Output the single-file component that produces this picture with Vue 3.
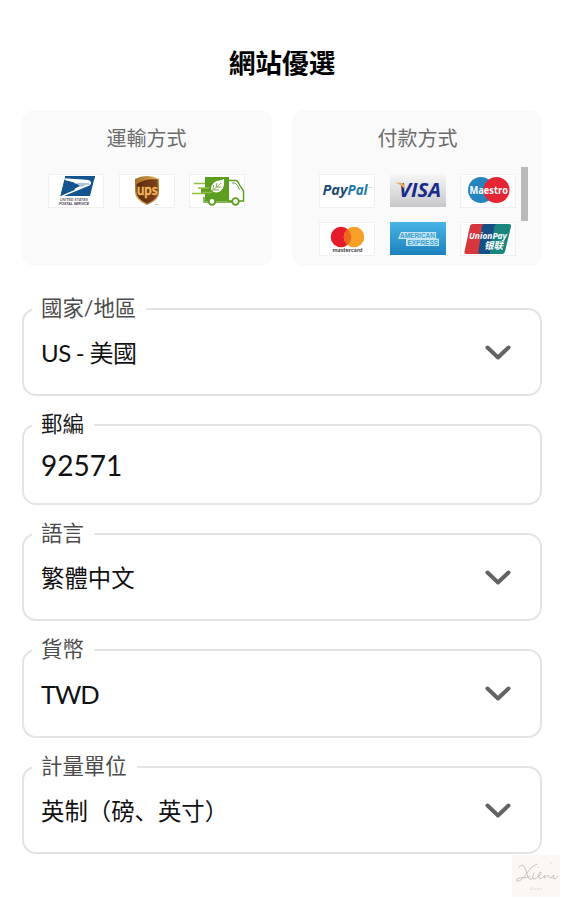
<script setup>
const fields = [
  { label: '國家/地區', value: 'US - 美國', kind: 'country', select: true },
  { label: '郵編', value: '92571', kind: 'zip', select: false },
  { label: '語言', value: '繁體中文', kind: 'language', select: true },
  { label: '貨幣', value: 'TWD', kind: 'currency', select: true },
  { label: '計量單位', value: '英制（磅、英寸）', kind: 'unit', select: true },
]
</script>

<template>
  <main class="page">
    <h1 class="title">網站優選</h1>

    <div class="cards">
      <section class="card">
        <h2>運輸方式</h2>
        <div class="logos">
          <svg class="tile framed" viewBox="0 0 56 34">
            <path d="M17.500 2H47L42 22H12.500z" fill="#13548e" />
            <path d="M17.500 4.200L38 5.800Q43.500 6 43 9.500L42 11.200L16 22L12.500 21.800L33 11.500Q29.500 9.600 25 8.700L16.800 6.500z" fill="#fff" />
            <path d="M17 2H47L46 6.500L38 5L17 4z" fill="#13548e" />
            <path d="M16.300 6L26 8.500Q28 12 26.500 16L12.500 22z" fill="#13548e" />
            <path d="M28 9h12q2 .3 1.600 2.500-1-1.200-3.500-.7L33 13z" fill="#a9c3da" />
            <text x="12" y="27" textLength="28" lengthAdjust="spacingAndGlyphs" font-size="3.900" font-weight="700" font-style="italic" fill="#655d68">UNITED STATES</text>
            <text x="11" y="31.200" textLength="30" lengthAdjust="spacingAndGlyphs" font-size="4.300" font-weight="700" font-style="italic" fill="#39304a">POSTAL SERVICE</text>
          </svg>
          <svg class="tile framed" viewBox="0 0 56 34">
            <defs>
              <linearGradient id="ups-gold" x1="0" x2="1" y1="0" y2="1"><stop stop-color="#9c641c" /><stop offset=".45" stop-color="#d9a551" /><stop offset="1" stop-color="#965b1e" /></linearGradient>
              <linearGradient id="ups-brown" x1="0" x2="1"><stop stop-color="#5b2b0d" /><stop offset="1" stop-color="#7c431b" /></linearGradient>
            </defs>
            <path d="M16 5Q28-1 40 5V18Q40 26 28 31Q16 26 16 18z" fill="url(#ups-gold)" />
            <path d="M17.500 10Q26 4 38.700 5.500V18Q38.500 25 28 29.500Q17.500 25 17.500 18z" fill="url(#ups-brown)" />
            <text x="18" y="20.500" textLength="20.500" lengthAdjust="spacingAndGlyphs" font-family="Lato" font-size="15" font-weight="700" fill="#f4b657" stroke="#f4b657" stroke-width=".4">ups</text>
            <text x="36" y="31" font-size="2.500" fill="#94683c">TM</text>
          </svg>
          <svg class="tile framed" viewBox="0 0 56 34">
            <path d="M16 3H40V27H16V20H12V14H16z" fill="#5b9e20" />
            <g fill="none" stroke="#5b9e20" stroke-width="1.400">
              <path d="M39 6.500H47Q49 7 50.500 11L54.500 17V27H39M15 23V28H48" />
              <path d="M43 9H46Q49 11 50.500 16" stroke="#75965f" stroke-width="1" />
              <path d="M5 9.500H16M9 14H20M3 19.500H15M14 18.500H23" stroke="#93be3e" />
            </g>
            <path d="M35 5Q36 14 31 17.500Q25 20 22 15.500Q22 9 28 7Q32 6.500 35 5" fill="#fff" />
            <path d="M19 21L32 9M24 16L24.500 11M27 13.500L28 9M25 16L30 16M28 13L32 13" fill="none" stroke="#80af4a" />
            <g fill="#fff" stroke="#5b9e20" stroke-width="1.800"><circle cx="23" cy="27.500" r="3.300" /><circle cx="46.500" cy="27.500" r="3.300" /></g>
          </svg>
        </div>
      </section>

      <section class="card payment">
        <h2>付款方式</h2>
        <div class="logos">
          <svg class="tile framed" viewBox="0 0 56 34">
            <text x="3.500" y="21" textLength="25" lengthAdjust="spacingAndGlyphs" class="sans" font-size="13.500" font-weight="700" font-style="italic" fill="#204b75">Pay</text>
            <text x="28.500" y="21" textLength="20" lengthAdjust="spacingAndGlyphs" class="sans" font-size="13.500" font-weight="700" font-style="italic" fill="#2278a5">Pal</text>
            <text x="49.500" y="13.500" font-size="2.500" fill="#6697b5">TM</text>
          </svg>
          <svg class="tile" viewBox="0 0 56 34">
            <defs><linearGradient id="visa-bg" x1="0" x2="0" y1="0" y2="1"><stop stop-color="#f6f6f6" /><stop offset="1" stop-color="#c8c8cb" /></linearGradient></defs>
            <rect width="56" height="33" fill="url(#visa-bg)" />
            <text x="9" y="23" textLength="42" lengthAdjust="spacingAndGlyphs" class="sans" font-size="20" font-weight="700" font-style="italic" fill="#192b88">VISA</text>
            <path d="M5.500 8.800H12Q13.500 9 14 11L14.800 15Q11 10.500 5.500 8.800" fill="#e5ac50" />
          </svg>
          <svg class="tile framed" viewBox="0 0 56 34">
            <circle cx="21" cy="16" r="13" fill="#2583c0" /><circle cx="36.500" cy="16" r="13" fill="#e52531" />
            <text x="9.500" y="20" textLength="38.500" lengthAdjust="spacingAndGlyphs" class="sans" font-size="11" font-weight="700" fill="#fff">Maestro</text>
          </svg>
          <svg class="tile framed" viewBox="0 0 56 34">
            <circle cx="22" cy="15" r="10.300" fill="#e51c2c" /><circle cx="35" cy="15" r="10.300" fill="#f8a027" /><path d="M28.500 7.100a10.300 10.300 0 0 1 0 15.800a10.300 10.300 0 0 1 0-15.800" fill="#f0671f" />
            <text x="13.500" y="30" textLength="30" lengthAdjust="spacingAndGlyphs" font-family="Lato" font-size="5.500" font-weight="700" fill="#40383c">mastercard</text>
          </svg>
          <svg class="tile" viewBox="0 0 56 34">
            <defs><linearGradient id="amex-bg" x1="0" x2="0" y1="0" y2="1"><stop stop-color="#48b4e5" /><stop offset="1" stop-color="#1c82bd" /></linearGradient></defs>
            <rect width="56" height="33" fill="url(#amex-bg)" />
            <path d="M11 10H46V16.500H49V24H16V17H8z" fill="#c4e6f5" />
            <g font-family="Liberation Sans" font-size="7.500" font-weight="700" fill="#38a0d2">
              <text x="10" y="16" textLength="35" lengthAdjust="spacingAndGlyphs">AMERICAN</text>
              <text x="17.500" y="23.200" textLength="30.500" lengthAdjust="spacingAndGlyphs">EXPRESS</text>
            </g>
          </svg>
          <svg class="tile framed" viewBox="0 0 56 34">
            <path d="M13 2H27L20 32H6Q4 32 4.500 29.500L10 4Q10.500 2 13 2" fill="#d7363d" />
            <path d="M24.500 2H38L31 32H20Q18 32 18.500 29.500L22 4Q22.500 2 24.500 2" fill="#175086" />
            <path d="M37 2H49Q51.500 2 51 4.500L45 29.500Q44.500 32 42 32H31Q29.500 32 30 29.500L34.500 4Q35 2 37 2" fill="#18857f" />
            <text x="9" y="16.500" textLength="38" lengthAdjust="spacingAndGlyphs" class="sans" font-size="8.500" font-weight="700" font-style="italic" fill="#fff">UnionPay</text>
            <text x="24" y="26.800" textLength="19" lengthAdjust="spacingAndGlyphs" class="cjk" font-size="9.500" font-weight="700" font-style="italic" fill="#fff">银联</text>
          </svg>
        </div>
        <span class="scrollbar"></span>
      </section>
    </div>

    <form class="fields">
      <fieldset v-for="f in fields" :key="f.kind" :class="['field', f.kind]">
        <legend>{{ f.label }}</legend>
        <div class="row">
          <span class="value">{{ f.value }}</span>
          <svg v-if="f.select" class="chevron" viewBox="0 0 28 18"><path d="M3.500 3.500L14 13.500L24.500 3.500" /></svg>
        </div>
      </fieldset>
    </form>

    <svg class="stamp" viewBox="0 0 48 42">
      <rect width="48" height="42" fill="#fdf7f4" />
      <g fill="none" stroke="#bdb6b4" stroke-width=".8" stroke-linecap="round">
        <path d="M7 12Q11 8 13 13L16 22Q17 26 21 23M25 9Q19 11 14 19Q9 27 5 26Q3 24 8 23L18 22M22 18Q19 25 23 24L27 21Q31 17 28 17Q25 20 27 23Q29 25 33 20Q31 25 34 22Q37 19 37 22L38 23Q40 23 42 20Q40 24 42 24Q44 24 46 21" />
        <path d="M26 12v.2M39 8v.2" />
      </g>
      <text x="18" y="35" textLength="12" font-size="4" fill="#d5cdca">Xuxu</text>
    </svg>
  </main>
</template>

<style>
body {
  background: #fff;
}
</style>

<style scoped>
.page {
  position: relative;
  box-sizing: border-box;
  width: 565px;
  height: 900px;
  padding: 43px 23px 0 22px;
  overflow: hidden;
  background: #fff;
  font-family: Lato, "Noto Sans CJK SC", sans-serif;
  color: #111;
}
.title {
  margin: 0;
  height: 67px;
  line-height: 40px;
  font-size: 26.7px;
  font-weight: 700;
  text-align: center;
  color: #000;
}
.cards {
  display: grid;
  grid-template-columns: 250px 250px;
  justify-content: space-between;
}
.card {
  position: relative;
  box-sizing: border-box;
  height: 156px;
  padding: 13px 0 0 26px;
  border-radius: 12px;
  background: #fafafa;
}
.card h2 {
  margin: 0 27px 0 0;
  height: 51px;
  line-height: 30px;
  font-size: 20px;
  font-weight: 400;
  text-align: center;
  color: #6c6c6c;
}
.payment h2 {
  margin-right: 25px;
}
.logos {
  display: grid;
  grid-template-columns: repeat(3, 56px);
  gap: 13.5px 14.5px;
}
.payment .logos {
  padding-left: 1px;
}
.tile {
  display: block;
  width: 56px;
  height: 34px;
  font-family: "Liberation Sans", sans-serif;
}
.framed {
  background: #fff;
  box-shadow: inset 0 0 0 1px #f0f0f0;
}
.sans {
  font-family: "Open Sans", sans-serif;
}
.cjk {
  font-family: "Noto Sans CJK SC", sans-serif;
}
.scrollbar {
  position: absolute;
  top: 57px;
  right: 14px;
  width: 7px;
  height: 54px;
  background: #bababa;
}
.fields {
  display: flex;
  flex-direction: column;
  gap: 14px;
  margin-top: 28px;
}
.field {
  box-sizing: border-box;
  height: 102.200px;
  min-width: 0;
  margin: 0;
  padding: 0 28px 0 17px;
  border: 2px solid #e4e4e4;
  border-radius: 14px;
}
.field.zip {
  height: 95px;
}
legend {
  height: 30px;
  margin-left: -9px;
  padding: 0 10px 0 9px;
  line-height: 28px;
  font-size: 21.400px;
  color: #4c4c4c;
}
.zip legend {
  color: #1a1a1a;
}
.row {
  display: flex;
  align-items: center;
  justify-content: space-between;
  height: 58px;
}
.zip .row {
  height: 50px;
}
.value {
  font-size: 23.400px;
  line-height: 34px;
  white-space: nowrap;
}
.country .value {
  font-size: 24px;
  letter-spacing: -0.500px;
  word-spacing: -0.500px;
}
.zip .value {
  font-size: 28px;
}
.currency .value {
  font-size: 25.500px;
  letter-spacing: -1.100px;
}
.chevron {
  width: 28px;
  height: 18px;
  fill: none;
  stroke: #636363;
  stroke-width: 4;
  stroke-linecap: round;
  stroke-linejoin: round;
}
.stamp {
  position: absolute;
  left: 512px;
  top: 855px;
  width: 48px;
  height: 42px;
  font-family: Lato, sans-serif;
}
</style>
